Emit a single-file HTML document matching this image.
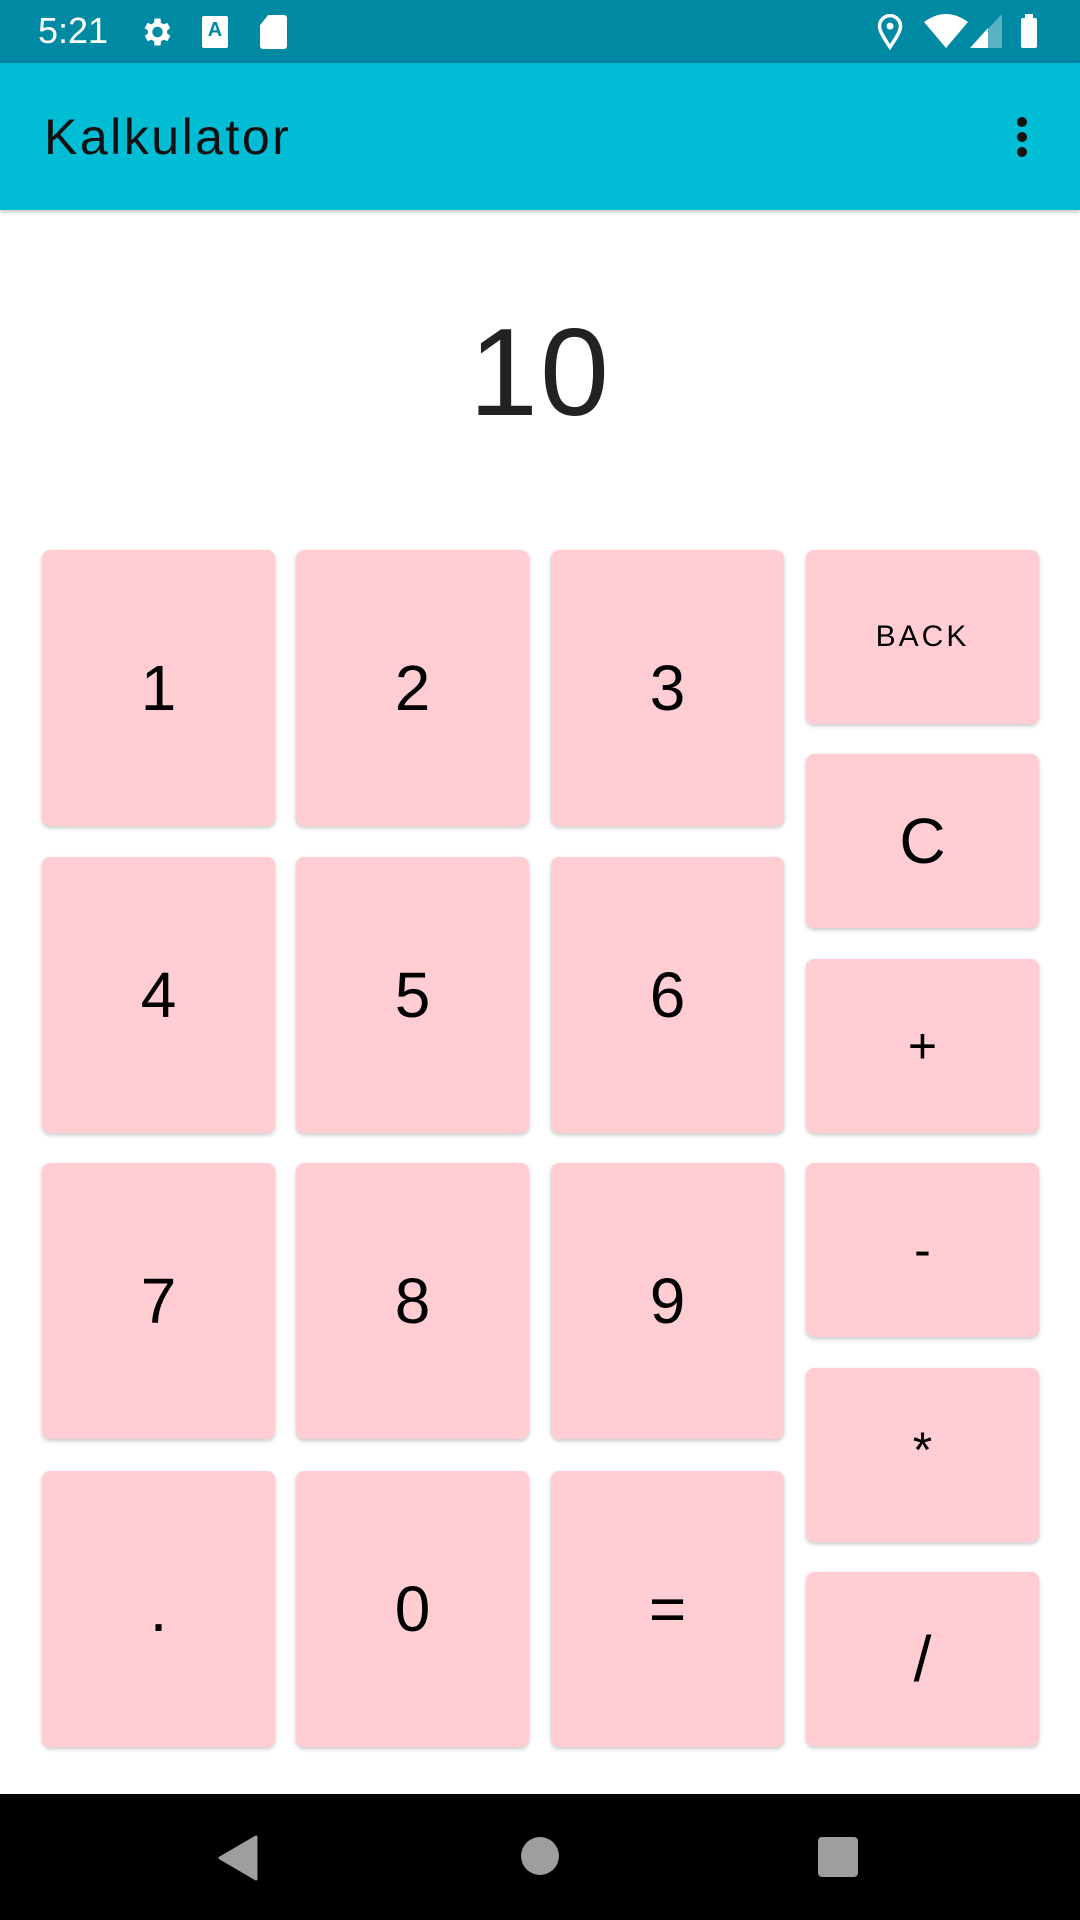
<!DOCTYPE html>
<html><head><meta charset="utf-8"><style>
*{margin:0;padding:0;box-sizing:border-box}
body{width:1080px;height:1920px;background:#fff;position:relative;overflow:hidden;font-family:"Liberation Sans",sans-serif}
.sb{position:absolute;left:0;top:0;width:1080px;height:63px;background:#0089a3;color:#fff}
.ab{position:absolute;left:0;top:63px;width:1080px;height:147px;background:#00bcd4;box-shadow:0 2px 4px rgba(0,0,0,.25)}
.ab .t{position:absolute;left:44px;top:45px;font-size:50px;color:#111;letter-spacing:2.5px}
.disp{position:absolute;left:0;width:1080px;top:298px;text-align:center;font-size:124px;color:#222;line-height:150px;letter-spacing:2px}
.b{position:absolute;background:#ffcdd2;border-radius:8px;box-shadow:0 2px 4px rgba(0,0,0,.22);display:flex;align-items:center;justify-content:center;font-size:64px;color:#000}
.nav{position:absolute;left:0;top:1794px;width:1080px;height:126px;background:#000}
</style></head><body>
<div class="sb">
<div style="position:absolute;left:38px;top:10px;font-size:36px">5:21</div>
<svg style="position:absolute;left:138px;top:14px" width="36" height="36" viewBox="0 0 24 24"><path fill="#fff" d="M19.4 13a7.5 7.5 0 000-2l2.1-1.6-2-3.5-2.5 1a7 7 0 00-1.7-1L15 3h-4l-.4 2.9a7 7 0 00-1.7 1l-2.5-1-2 3.5L6.6 11a7.5 7.5 0 000 2l-2.1 1.6 2 3.5 2.5-1a7 7 0 001.7 1L11 21h4l.4-2.9a7 7 0 001.7-1l2.5 1 2-3.5zM13 15.5a3.5 3.5 0 110-7 3.5 3.5 0 010 7z"/></svg>
<div style="position:absolute;left:202px;top:16px;width:26px;height:32px;background:#fff;border-radius:2px;color:#0089a3;font-size:20px;font-weight:bold;text-align:center;line-height:28px">A</div>
<div style="position:absolute;left:260px;top:15px;width:27px;height:34px;background:#fff;border-radius:3px;clip-path:polygon(30% 0,100% 0,100% 100%,0 100%,0 30%)"></div>
<svg style="position:absolute;left:876px;top:14px" width="28" height="36" viewBox="0 0 24 30"><path fill="none" stroke="#fff" stroke-width="3" d="M12 28C6 19 3 14 3 10a9 9 0 0118 0c0 4-3 9-9 18z"/><circle cx="12" cy="10" r="3" fill="#fff"/></svg>
<svg style="position:absolute;left:924px;top:14px" width="44" height="34" viewBox="0 0 44 34"><path fill="#fff" d="M0 8Q22-8 44 8L22 34z"/></svg>
<svg style="position:absolute;left:970px;top:14px" width="32" height="34" viewBox="0 0 32 34"><path fill="#fff" opacity=".35" d="M32 0V34H0z"/><path fill="#fff" d="M18 14V34H0z"/></svg>
<div style="position:absolute;left:1021px;top:18px;width:16px;height:30px;background:#fff;border-radius:2px"></div>
<div style="position:absolute;left:1025px;top:14px;width:8px;height:5px;background:#fff"></div>
</div>
<div class="ab"><div class="t">Kalkulator</div>
<div style="position:absolute;left:1017px;top:54px;width:10px;height:10px;border-radius:50%;background:#111;box-shadow:0 15px 0 #111,0 30px 0 #111"></div></div>
<div class="disp">10</div>

<div class="b" style="left:42px;top:550px;width:233px;height:276px">1</div>
<div class="b" style="left:296px;top:550px;width:233px;height:276px">2</div>
<div class="b" style="left:551px;top:550px;width:233px;height:276px">3</div>
<div class="b" style="left:42px;top:857px;width:233px;height:276px">4</div>
<div class="b" style="left:296px;top:857px;width:233px;height:276px">5</div>
<div class="b" style="left:551px;top:857px;width:233px;height:276px">6</div>
<div class="b" style="left:42px;top:1163px;width:233px;height:276px">7</div>
<div class="b" style="left:296px;top:1163px;width:233px;height:276px">8</div>
<div class="b" style="left:551px;top:1163px;width:233px;height:276px">9</div>
<div class="b" style="left:42px;top:1471px;width:233px;height:276px">.</div>
<div class="b" style="left:296px;top:1471px;width:233px;height:276px">0</div>
<div class="b" style="left:551px;top:1471px;width:233px;height:276px">=</div>

<div class="b" style="left:806px;top:550px;width:233px;height:174px;font-size:30px;letter-spacing:3px;align-items:flex-start;padding-top:70px">BACK</div>
<div class="b" style="left:806px;top:754px;width:233px;height:174px">C</div>
<div class="b" style="left:806px;top:959px;width:233px;height:174px;font-size:50px">+</div>
<div class="b" style="left:806px;top:1163px;width:233px;height:174px;font-size:50px;align-items:flex-start;padding-top:58px">-</div>
<div class="b" style="left:806px;top:1368px;width:233px;height:174px;font-size:50px;align-items:flex-start;padding-top:53px">*</div>
<div class="b" style="left:806px;top:1572px;width:233px;height:174px">/</div>

<div class="nav">
<svg style="position:absolute;left:218px;top:41px" width="40" height="46" viewBox="0 0 40 46"><path fill="#9e9e9e" d="M38 2V44L2 23z" stroke="#9e9e9e" stroke-width="3" stroke-linejoin="round"/></svg>
<div style="position:absolute;left:521px;top:43px;width:38px;height:38px;border-radius:50%;background:#9e9e9e"></div>
<div style="position:absolute;left:818px;top:43px;width:40px;height:40px;border-radius:4px;background:#9e9e9e"></div>
</div>
</body></html>
